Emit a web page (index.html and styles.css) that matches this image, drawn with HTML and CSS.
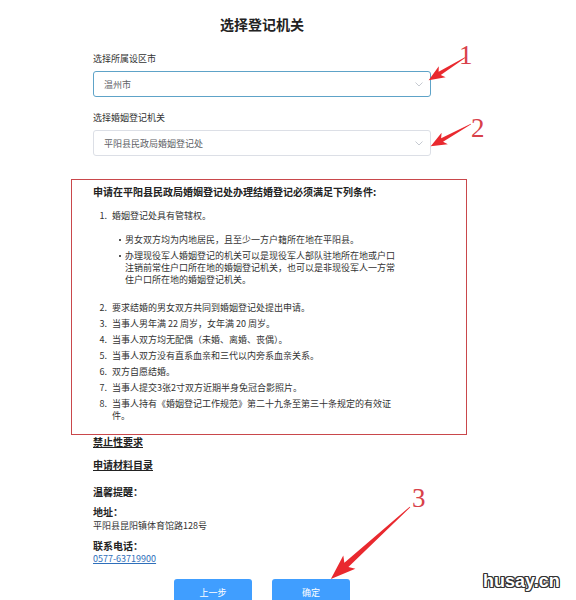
FILE: index.html
```html
<!DOCTYPE html>
<html lang="zh-CN">
<head>
    <meta charset="UTF-8">
    <title>选择登记机关</title>
    <link rel="stylesheet" href="styles.css">
</head>
<body>
    <div class="page">
        <h1 class="page-title">选择登记机关</h1>

        <div class="form-group">
            <div class="form-label">选择所属设区市</div>
            <div class="select focused">
                <span class="select-value">温州市</span>
                <svg class="chevron" width="8" height="5" viewBox="0 0 8 5"><polyline points="0.5,0.5 4,4 7.5,0.5" fill="none" stroke="#c0c4cc" stroke-width="0.9"/></svg>
            </div>
        </div>

        <div class="form-group">
            <div class="form-label">选择婚姻登记机关</div>
            <div class="select">
                <span class="select-value">平阳县民政局婚姻登记处</span>
                <svg class="chevron" width="8" height="5" viewBox="0 0 8 5"><polyline points="0.5,0.5 4,4 7.5,0.5" fill="none" stroke="#c0c4cc" stroke-width="0.9"/></svg>
            </div>
        </div>

        <!-- conditions, boxed in red -->
        <div class="conditions">
            <div class="cond-title">申请在平阳县民政局婚姻登记处办理结婚登记必须满足下列条件:</div>
            <ol class="cond-list">
                <li class="cond-item">
                    <span class="num">1.</span>
                    <div>
                        婚姻登记处具有管辖权。
                        <ul class="sub-list">
                            <li class="sub-item"><span class="dot"></span><span>男女双方均为内地居民，且至少一方户籍所在地在平阳县。</span></li>
                            <li class="sub-item"><span class="dot"></span><span>办理现役军人婚姻登记的机关可以是现役军人部队驻地所在地或户口注销前常住户口所在地的婚姻登记机关，也可以是非现役军人一方常住户口所在地的婚姻登记机关。</span></li>
                        </ul>
                    </div>
                </li>
                <li class="cond-item"><span class="num">2.</span><div>要求结婚的男女双方共同到婚姻登记处提出申请。</div></li>
                <li class="cond-item"><span class="num">3.</span><div>当事人男年满 22 周岁，女年满 20 周岁。</div></li>
                <li class="cond-item"><span class="num">4.</span><div>当事人双方均无配偶（未婚、离婚、丧偶）。</div></li>
                <li class="cond-item"><span class="num">5.</span><div>当事人双方没有直系血亲和三代以内旁系血亲关系。</div></li>
                <li class="cond-item"><span class="num">6.</span><div>双方自愿结婚。</div></li>
                <li class="cond-item"><span class="num">7.</span><div>当事人提交3张2寸双方近期半身免冠合影照片。</div></li>
                <li class="cond-item"><span class="num">8.</span><div>当事人持有《婚姻登记工作规范》第二十九条至第三十条规定的有效证件。</div></li>
            </ol>
        </div>

        <div class="info">
            <a class="info-link first">禁止性要求</a>
            <a class="info-link">申请材料目录</a>
            <div class="info-head tip">温馨提醒：</div>
            <div class="info-head">地址：</div>
            <div class="info-text">平阳县昆阳镇体育馆路128号</div>
            <div class="info-head">联系电话：</div>
            <a class="phone">0577-63719900</a>
        </div>

        <div class="actions">
            <button class="btn">上一步</button>
            <button class="btn">确定</button>
        </div>
    </div>

    <!-- red annotation arrows -->
    <svg class="marks" width="576" height="600" viewBox="0 0 576 600">
        <g fill="#e9292f">
            <polygon transform="translate(466,57) rotate(148.1)" points="0,-0.3 31,-2 28,-6.5 44,0 28,6.5 31,2 0,0.3"/>
            <polygon transform="translate(471,124) rotate(151.2)" points="0,-0.3 33,-2 30,-6.5 46,0 30,6.5 33,2 0,0.3"/>
            <polygon transform="translate(410,507) rotate(137.7)" points="0,-0.4 86,-3 82,-9 107,0 82,9 86,3 0,0.4"/>
        </g>
        <g class="mark-num" fill="#d8414a">
            <text x="459" y="64">1</text>
            <text x="471" y="137">2</text>
            <text x="412" y="507">3</text>
        </g>
    </svg>

    <div class="watermark">husay.cn</div>
</body>
</html>
```

FILE: styles.css
```css
body {
    margin: 0;
    background: #fff;
    font-family: "Noto Sans CJK SC", "Liberation Sans", sans-serif;
    color: #333;
    position: relative;
    height: 600px;
    overflow: hidden;
}

.page {
    width: 338px;
    margin-left: 93px;
    padding-top: 14px;
}

.page-title {
    margin: 0 0 18px;
    font-size: 14px;
    line-height: 20px;
    font-weight: bold;
    text-align: center;
    color: #222;
}

.form-group {
    margin-bottom: 14px;
}

.form-label {
    font-size: 9px;
    line-height: 14px;
    margin-bottom: 5px;
    color: #333;
}

.select {
    box-sizing: border-box;
    height: 26px;
    border: 1px solid #dcdfe6;
    border-radius: 3px;
    display: flex;
    align-items: center;
    justify-content: space-between;
    padding: 0 7px 0 10px;
}

.select.focused {
    border-color: #5ea3c8;
}

.select-value {
    font-size: 9px;
    color: #606266;
}

.chevron {
    display: block;
}

.conditions {
    margin: 23px -36px 0 -22px;
    border: 1px solid #c9474b;
    padding: 5px 0 0 21px;
    height: 249px;
}

.cond-title {
    font-size: 10px;
    line-height: 14px;
    font-weight: bold;
    color: #222;
}

.cond-list {
    list-style: none;
    margin: 11px 0 0;
    padding: 0;
    width: 310px;
    font-size: 9px;
    line-height: 12px;
}

.cond-item {
    display: grid;
    grid-template-columns: 19px 1fr;
    margin-bottom: 4px;
}

.num {
    text-align: right;
    padding-right: 5px;
}

.sub-list {
    list-style: none;
    margin: 12px 0 12px;
    padding: 0;
}

.sub-item {
    display: grid;
    grid-template-columns: 13px 1fr;
    margin-bottom: 4px;
}

.dot {
    width: 2px;
    height: 2px;
    background: #555;
    margin: 5px 0 0 7px;
}

.info {
    display: flex;
    flex-direction: column;
    align-items: flex-start;
}

.info-link {
    font-size: 10px;
    line-height: 14px;
    font-weight: bold;
    color: #222;
    text-decoration: underline;
    margin-top: 9px;
}

.info-link.first {
    margin-top: 0;
}

.info-head {
    font-size: 10px;
    line-height: 14px;
    font-weight: bold;
    color: #222;
    margin-top: 6px;
}

.info-head.tip {
    margin-top: 13px;
}

.info-text {
    font-size: 9px;
    line-height: 12px;
    margin-top: 1px;
}

.info-text + .info-head {
    margin-top: 7px;
}

.phone {
    font-size: 9px;
    line-height: 12px;
    color: #2f6fba;
    text-decoration: underline;
}

.actions {
    display: flex;
    justify-content: center;
    gap: 20px;
    margin-top: 14px;
}

.btn {
    width: 78px;
    height: 26px;
    border: none;
    border-radius: 3px;
    background: #409eff;
    color: #fff;
    font-family: "Noto Sans CJK SC", sans-serif;
    font-size: 9px;
    padding: 0;
}

.marks {
    position: absolute;
    left: 0;
    top: 0;
    pointer-events: none;
}

.mark-num {
    font-family: "Liberation Serif", serif;
    font-size: 27px;
}

.watermark {
    position: absolute;
    left: 483px;
    top: 571px;
    font-family: "Liberation Sans", sans-serif;
    font-weight: bold;
    font-size: 18px;
    color: #fff;
    text-shadow: -1px -1px 0 #333, 1px -1px 0 #333, -1px 1px 0 #333, 1px 1px 0 #333,
        0 -1px 0 #333, 0 1px 0 #333, -1px 0 0 #333, 1px 0 0 #333;
}
```
